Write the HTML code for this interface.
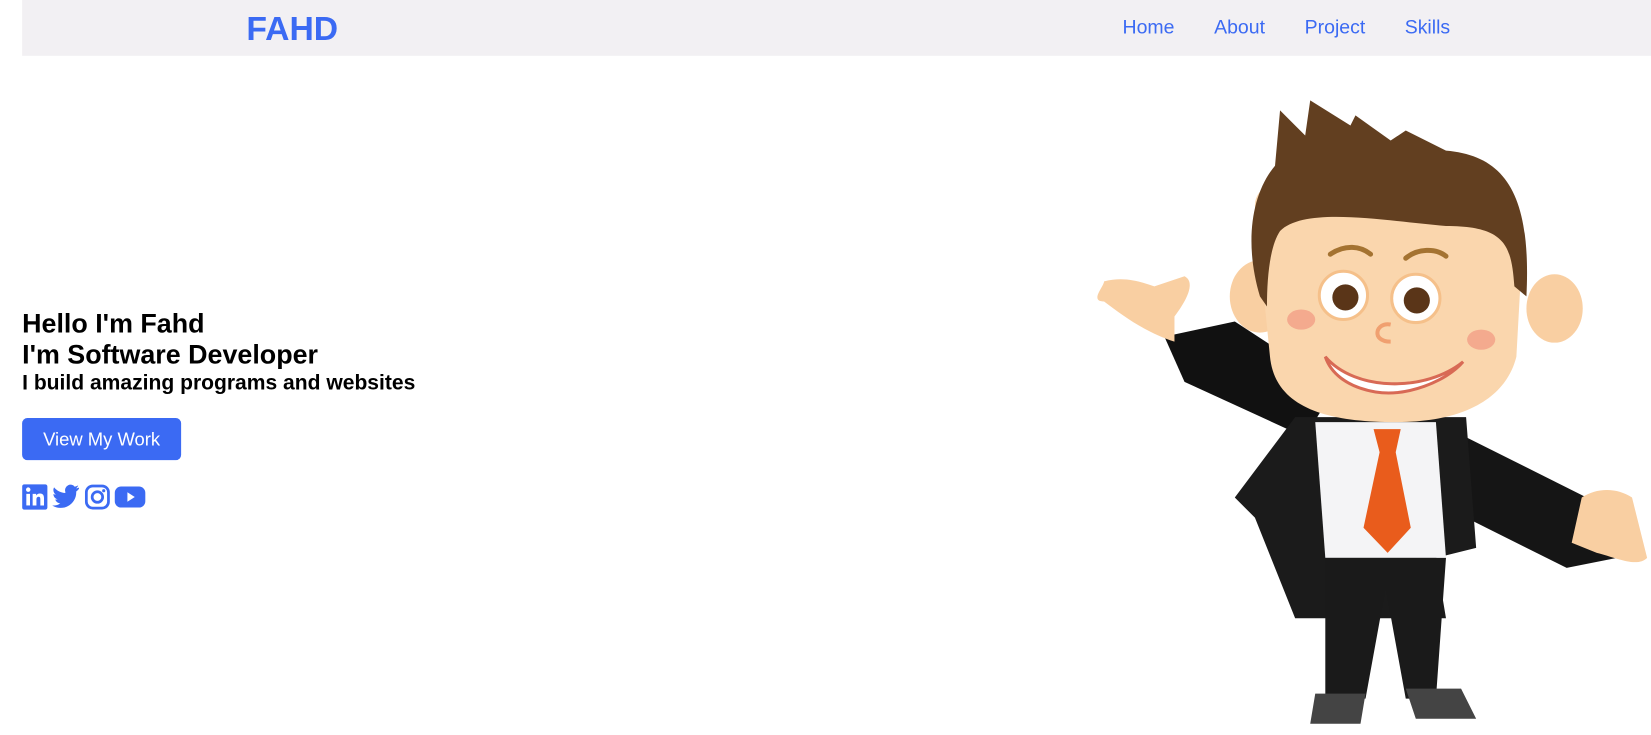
<!DOCTYPE html>
<html><head><meta charset="utf-8"><style>
*{margin:0;padding:0;box-sizing:border-box}
body{width:1651px;height:735px;background:#fff;font-family:"Liberation Sans",Arial,sans-serif;position:relative;overflow:hidden}
#w{position:absolute;left:0;top:0;width:1568px;height:698px;transform:scale(1.053);transform-origin:0 0}
nav{position:absolute;left:21px;top:0;width:1547px;height:53px;background:#f2f0f3}
.logo{position:absolute;left:213px;top:9px;font-size:32px;font-weight:bold;color:#3b6af3}
.links a{position:absolute;top:15px;font-size:18.5px;color:#3b6af3;text-decoration:none}
.hero{position:absolute;left:21px;top:294px;color:#000;font-weight:bold}
.h1{font-size:25.5px;line-height:29px}
.h3{font-size:20px;line-height:24px}
.btn{position:absolute;left:21px;top:397px;width:151px;height:40px;background:#3b6af3;border-radius:5px;color:#fff;font-size:17.5px;text-align:center;line-height:40px}
.icons{position:absolute;left:21px;top:459px}
svg.c{position:absolute;left:0;top:0}
</style></head><body><div id="w">
<nav><div class="logo">FAHD</div>
<div class="links"><a style="left:1045px">Home</a><a style="left:1132px">About</a><a style="left:1218px">Project</a><a style="left:1313px">Skills</a></div></nav>
<div class="hero"><div class="h1">Hello I'm Fahd</div><div class="h1">I'm Software Developer</div><div class="h3">I build amazing programs and websites</div></div>
<div class="btn">View My Work</div>
<svg class="icons" width="120" height="26" viewBox="0 0 120 26">
<rect x="0" y="1" width="24" height="24" rx="2" fill="#3b6af3"/>
<rect x="4" y="10" width="3.5" height="11" fill="#fff"/><circle cx="5.8" cy="6" r="2.1" fill="#fff"/>
<path d="M10 10h3.3v1.6c.6-1 1.8-1.9 3.7-1.9 3 0 3.8 2 3.8 4.8V21h-3.5v-5.8c0-1.4-.3-2.4-1.7-2.4s-2 1-2 2.4V21H10z" fill="#fff"/>
<path d="M54 4c-1 .5-2 .7-3 .8 1.1-.7 1.9-1.7 2.3-2.9-1 .6-2.1 1-3.3 1.3A5.2 5.2 0 0 0 41 8c0 .4 0 .8.1 1.2C36.8 9 33 7 30.4 3.800c-1.5 2.5-.5 5.5 1.6 6.9-.8 0-1.6-.3-2.3-.6 0 2.5 1.8 4.6 4.1 5.1-.8.2-1.6.3-2.3.1.6 2.1 2.6 3.6 4.8 3.6A10.5 10.5 0 0 1 28.6 21 14.8 14.8 0 0 0 51.4 8.5V7.8c1-.7 1.9-1.6 2.6-2.6z" fill="#3b6af3"/>
<rect x="61" y="2.5" width="21" height="21" rx="6" fill="none" stroke="#3b6af3" stroke-width="2.6"/>
<circle cx="71.5" cy="13" r="5" fill="none" stroke="#3b6af3" stroke-width="2.6"/><circle cx="77.5" cy="7" r="1.5" fill="#3b6af3"/>
<rect x="88" y="3" width="29" height="20" rx="6" fill="#3b6af3"/><path d="M100 8.5v9l7-4.5z" fill="#fff"/>
</svg>
<svg class="c" width="1568" height="698" viewBox="0 0 1568 698">
<g transform="translate(-2,-5) scale(0.955)">
<path d="M1160 340 L1230 325 L1330 390 L1300 440 L1180 385 Z" fill="#111"/>
<path d="M1100 285 C1120 280 1135 285 1150 290 L1180 280 C1190 285 1185 300 1170 320 L1170 345 C1140 335 1120 320 1100 305 C1085 305 1100 290 1100 285 Z" fill="#f9cfa2"/>
<path d="M1420 420 L1590 505 L1610 560 L1560 570 L1400 490 Z" fill="#151515"/>
<path d="M1575 500 C1590 490 1610 490 1625 500 L1640 560 C1630 570 1610 560 1590 555 L1565 545 Z" fill="#f9cfa2"/>
<path d="M1290 420 L1460 420 L1470 550 L1430 560 L1440 620 L1290 620 L1250 520 L1230 500 Z" fill="#1b1b1b"/>
<path d="M1310 425 L1430 425 L1440 560 L1320 560 Z" fill="#f4f4f6"/>
<path d="M1368 432 L1395 432 L1390 455 L1405 530 L1382 555 L1358 530 L1374 455 Z" fill="#e95c1c"/>
<path d="M1320 560 L1440 560 L1430 700 L1400 700 L1380 590 L1360 700 L1320 700 Z" fill="#1a1a1a"/>
<path d="M1310 695 L1360 695 L1355 725 L1305 725 Z M1400 690 L1455 690 L1470 720 L1410 720 Z" fill="#444"/>
<ellipse cx="1255" cy="300" rx="30" ry="36" fill="#f9cfa2"/>
<ellipse cx="1548" cy="312" rx="28" ry="34" fill="#f9cfa2"/>
<path d="M1250 210 C1250 180 1300 175 1390 185 C1470 195 1520 200 1515 270 L1510 360 C1500 400 1460 425 1390 425 C1320 425 1270 410 1265 360 Z" fill="#fad6ad"/>
<path d="M1255 300 C1240 250 1245 200 1270 170 L1275 115 L1300 140 L1305 105 L1345 130 L1350 120 L1385 145 L1400 135 L1440 155 C1500 160 1525 200 1520 300 L1508 290 C1505 250 1500 230 1440 230 C1380 225 1300 210 1275 235 C1265 250 1262 280 1262 310 Z" fill="#623f20"/>
<ellipse cx="1338" cy="299" rx="24" ry="24" fill="#fff" stroke="#f5c08a" stroke-width="3"/>
<ellipse cx="1410" cy="302" rx="24" ry="24" fill="#fff" stroke="#f5c08a" stroke-width="3"/>
<circle cx="1340" cy="301" r="13" fill="#5a3518"/><circle cx="1411" cy="304" r="13" fill="#5a3518"/>
<path d="M1325 258 C1340 248 1355 250 1365 258 M1400 262 C1412 252 1430 252 1440 260" fill="none" stroke="#a47331" stroke-width="5" stroke-linecap="round"/>
<ellipse cx="1296" cy="323" rx="14" ry="10" fill="#f4aa8e"/><ellipse cx="1475" cy="343" rx="14" ry="10" fill="#f4aa8e"/>
<path d="M1385 328 C1370 325 1365 345 1385 345" fill="none" stroke="#f0a070" stroke-width="4"/>
<path d="M1320 360 C1350 395 1420 395 1457 365 C1440 385 1400 400 1370 395 C1340 390 1325 375 1320 360 Z" fill="#fff" stroke="#d86a55" stroke-width="3"/>
</g>
</svg>
</div></body></html>
